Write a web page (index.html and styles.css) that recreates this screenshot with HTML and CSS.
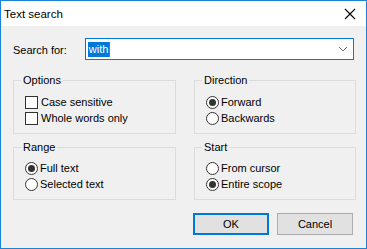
FILE: index.html
```html
<!DOCTYPE html>
<html lang="en">
<head>
    <meta charset="UTF-8">
    <title>Text search</title>
    <link rel="stylesheet" href="styles.css">
</head>
<body>
    <div class="dialog">
        <div class="title-bar">
            <span class="title">Text search</span>
            <svg class="close" width="12" height="12" viewBox="0 0 12 12">
                <path d="M1 1 L11 11 M11 1 L1 11" stroke="#000" stroke-width="1.1" fill="none"/>
            </svg>
        </div>

        <div class="content">
            <div class="search-row">
                <label class="search-label">Search for:</label>
                <div class="combo">
                    <span class="selected">with</span><span class="caret"></span>
                    <svg class="chevron" width="10" height="6" viewBox="0 0 10 6">
                        <path d="M1 1 L5 5 L9 1" stroke="#6d6d6d" stroke-width="1" fill="none"/>
                    </svg>
                </div>
            </div>

            <div class="groups">
                <fieldset class="group">
                    <legend>Options</legend>
                    <div class="option"><span class="check"></span>Case sensitive</div>
                    <div class="option"><span class="check"></span>Whole words only</div>
                </fieldset>
                <fieldset class="group">
                    <legend>Direction</legend>
                    <div class="option"><span class="radio on"></span>Forward</div>
                    <div class="option"><span class="radio"></span>Backwards</div>
                </fieldset>
                <fieldset class="group">
                    <legend>Range</legend>
                    <div class="option"><span class="radio on"></span>Full text</div>
                    <div class="option"><span class="radio"></span>Selected text</div>
                </fieldset>
                <fieldset class="group">
                    <legend>Start</legend>
                    <div class="option"><span class="radio"></span>From cursor</div>
                    <div class="option"><span class="radio on"></span>Entire scope</div>
                </fieldset>
            </div>

            <div class="buttons">
                <button class="btn default">OK</button>
                <button class="btn">Cancel</button>
            </div>
        </div>
    </div>
</body>
</html>
```

FILE: styles.css
```css
body {
    margin: 0;
    padding: 0;
    font-family: "Liberation Sans", Arial, sans-serif;
    font-size: 11px;
    color: #000;
}

.dialog {
    width: 367px;
    height: 249px;
    box-sizing: border-box;
    border: 1px solid #1883d7;
    background-color: #f0f0f0;
    display: flex;
    flex-direction: column;
}

.title-bar {
    height: 25px;
    background-color: #fff;
    display: flex;
    align-items: center;
    justify-content: space-between;
    padding: 0 10px 0 3px;
}

.title {
    font-size: 11.5px;
    padding-top: 1px;
}

.close {
    margin-top: 1px;
}

.content {
    padding: 12px 12px 0 12px;
    display: flex;
    flex-direction: column;
}

.search-row {
    display: flex;
    align-items: center;
    height: 22px;
}

.search-label {
    width: 72px;
    padding-top: 1px;
}

.combo {
    width: 270px;
    height: 22px;
    box-sizing: border-box;
    border: 1px solid #0078d7;
    background-color: #fff;
    display: flex;
    align-items: center;
    padding-left: 2px;
}

.selected {
    background-color: #0078d7;
    color: #fff;
    line-height: 15px;
    padding: 0 1px;
}

.caret {
    width: 1px;
    height: 15px;
    background-color: #c0601a;
}

.chevron {
    margin-left: auto;
    margin-right: 5px;
}

.groups {
    display: grid;
    grid-template-columns: 163px 162px;
    column-gap: 18px;
    row-gap: 6px;
    margin-top: 13px;
}

.group {
    margin: 0;
    border: 1px solid #dcdcdc;
    padding: 7px 8px 7px 11px;
    min-width: 0;
}

.group:nth-child(n+3) {
    padding-top: 6px;
}

.group legend {
    padding: 0 2px;
    margin-left: -4px;
    line-height: 14px;
}

.option {
    display: flex;
    align-items: center;
    height: 16px;
    white-space: nowrap;
}

.check {
    width: 13px;
    height: 13px;
    box-sizing: border-box;
    border: 1px solid #333;
    background-color: #fff;
    margin-right: 3px;
}

.radio {
    width: 13px;
    height: 13px;
    box-sizing: border-box;
    border: 1px solid #333;
    border-radius: 50%;
    background-color: #fff;
    margin-right: 2px;
    display: flex;
    align-items: center;
    justify-content: center;
}

.radio.on::after {
    content: "";
    width: 7px;
    height: 7px;
    border-radius: 50%;
    background-color: #333;
}

.buttons {
    display: flex;
    justify-content: flex-end;
    gap: 8px;
    margin-top: 13px;
    padding-right: 1px;
}

.btn {
    width: 76px;
    height: 22px;
    box-sizing: border-box;
    border: 1px solid #adadad;
    background-color: #e1e1e1;
    font-family: "Liberation Sans", Arial, sans-serif;
    font-size: 11px;
    color: #000;
    padding: 0;
}

.btn.default {
    border: 2px solid #0078d7;
}
```
